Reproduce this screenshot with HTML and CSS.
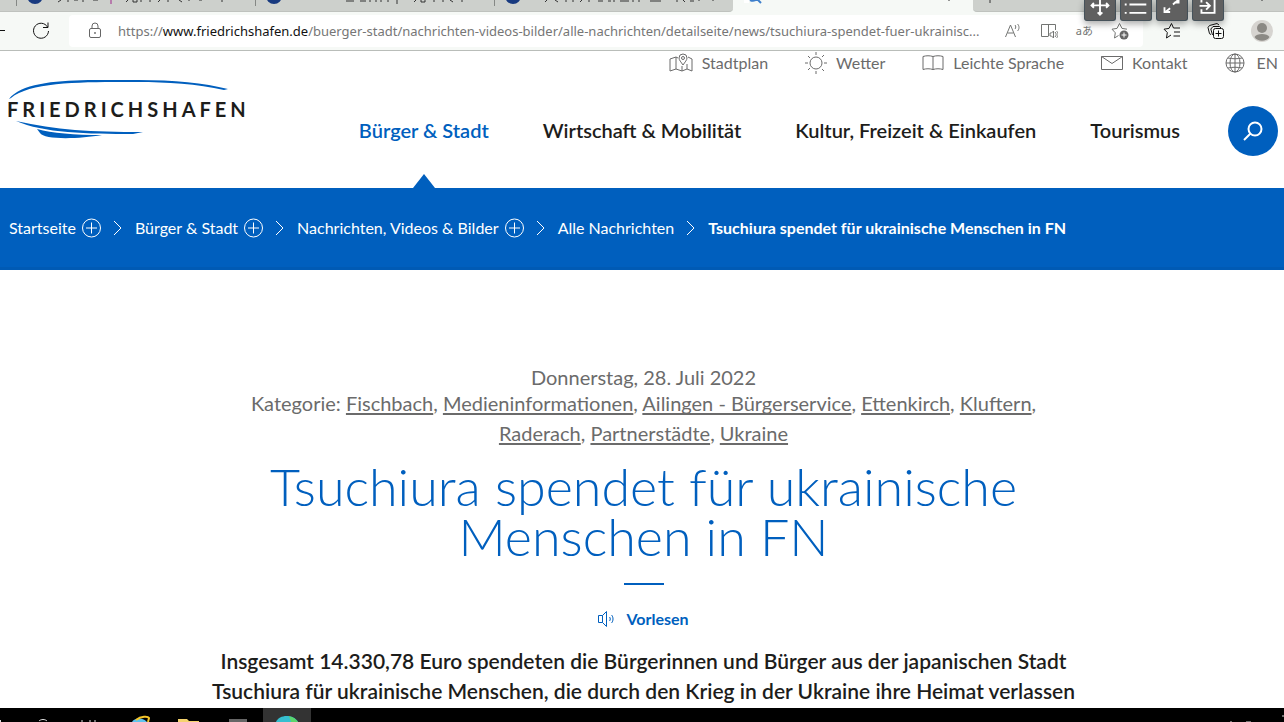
FILE: index.html
```html
<!DOCTYPE html>
<html lang="de">
<head>
<meta charset="utf-8">
<title>Tsuchiura spendet für ukrainische Menschen in FN</title>
<link rel="stylesheet" href="styles.css">
</head>
<body>
<div class="tabs">
  <div class="tab-group">
    <div class="tab"><svg class="tab-art" width="220" height="12" viewBox="0 0 220 12"><circle cx="18" cy="-4" r="8" fill="#183a80"/><path d="M44 0l-3 2M51 0v2M57 0h4M66 0v2M76 0h5M111 0l-2 2M116 0v2h4v-2M124 0v2M133 0v2M143 0l-2 2M151 0v2M162 0l3 2M172 0v1M182 0h3M205 0v2M222 0v2" /><path class="accent" d="M94 0v4"/></svg></div>
    <div class="tab"><svg class="tab-art" width="220" height="12" viewBox="0 0 220 12"><circle cx="18" cy="-4" r="8" fill="#183a80"/><path d="M90 1h8M104 1h6M114 0v2M120 0v2M125 0v2M132 0v2M160 0l-2 2M165 0v2h4v-2M178 0v2M187 0v2M194 0l3 2M206 0v2"/><path d="M141 0v4"/></svg></div>
    <div class="tab"><svg class="tab-art" width="220" height="12" viewBox="0 0 220 12"><circle cx="18" cy="-4" r="8" fill="#183a80"/><path d="M52 0l-2 2M60 0l3 2M71 0v2M78 0v2M87 0l-2 2M94 0v2M103 1h5M113 1h3M119 0v2M125 1h9M138 0v2M144 0v2M155 1h11M182 0v2M188 0l2 2M195 1h4M204 0v1M218 0v1"/></svg></div>
  </div>
  <div class="tab tab-active"><svg class="tab-art" width="220" height="12" viewBox="0 0 220 12"><path class="fav" d="M11 0h5v3h-5z"/><path class="search-tail" d="M17 0c2 1 5 1 7-1l4 4"/><path d="M216 0v1M222 0v1"/></svg></div>
  <div class="tab-rest"><svg class="tab-art" width="290" height="12" viewBox="0 0 290 12"><path d="M17 0v3M288 0h2"/></svg></div>
</div>

<div class="toolbar">
  <svg class="back" width="6" height="20" viewBox="0 0 6 20"><path d="M0 9.500h5"/></svg>
  <button class="tool reload" aria-label="Aktualisieren"><svg width="20" height="20" viewBox="0 0 20 20"><path d="M16.500 6A7.500 7.500 0 1 0 17.500 10M17 1.500V6.500H12"/></svg></button>
  <div class="address">
    <svg class="lock" width="14" height="18" viewBox="0 0 14 18"><rect x="1.500" y="6.500" width="11" height="9" rx="1.500"/><path d="M4 6V4a3 3 0 0 1 6 0v2"/><circle cx="7" cy="11" r=".6"/></svg>
    <p class="url">https://<b>www.friedrichshafen.de</b>/buerger-stadt/nachrichten-videos-bilder/alle-nachrichten/detailseite/news/tsuchiura-spendet-fuer-ukrainisc...</p>
    <div class="address-tools">
      <button class="tool" aria-label="Laut vorlesen"><svg width="18" height="18" viewBox="0 0 18 18"><path d="M1.500 15L6.500 3l5 12M3.500 11h6M11 3c1 1 1 3 0 4M13.500 2c2 2 2 5 0 7"/></svg></button>
      <button class="tool" aria-label="Plastischer Reader"><svg width="18" height="18" viewBox="0 0 18 18"><path d="M9 2.500H1.500v12H8M8.500 2.500v12M9 2.500h6.500V8M10 11v3h1.500l2 2v-7l-2 2zM15 10c1.500 1.500 1.500 3.500 0 5M16.500 9c2 2 2 5 0 7"/></svg></button>
      <button class="tool translate" aria-label="Übersetzen">aあ</button>
      <button class="tool" aria-label="Favorit hinzufügen"><svg width="18" height="18" viewBox="0 0 18 18"><path d="M7.500 13.500L3.500 16l.8-5.200L1 7.200l5-.8L8.500 1.500 11 6.400l5 .8"/><circle class="solid" cx="13" cy="13" r="4.500"/><path class="white" d="M10.500 13h5M13 10.500v5"/></svg></button>
    </div>
  </div>
  <div class="browser-tools">
    <button class="tool" aria-label="Favoriten"><svg width="18" height="18" viewBox="0 0 18 18"><path d="M8 13l-4.500 3 .8-5.500L1 7.200l5-.8L8.500 1.500 10.500 6H17M11 10h6M10.500 14H17"/></svg></button>
    <button class="tool" aria-label="Sammlungen"><svg width="18" height="18" viewBox="0 0 18 18"><path d="M4 12.500l-1.500-.8L1 5.500 2.500 3.500 10 1.500 12 3M5.500 13L3.800 7 6 4.500h6.500L14 6"/><rect x="6.500" y="6.500" width="10" height="10" rx="2"/><path d="M8.500 11.500h6M11.500 8.500v6"/></svg></button>
    <button class="tool" aria-label="Profil"><svg width="22" height="22" viewBox="0 0 22 22"><circle cx="11" cy="11" r="11" fill="#d6d4d0" stroke="none"/><circle cx="11" cy="8" r="5" fill="#8b8984" stroke="none"/><path d="M3.500 17c2-4 13-4 15 0-3 5-12 5-15 0z" fill="#8b8984" stroke="none"/></svg></button>
  </div>
</div>

<div class="remote-bar">
  <button aria-label="Verschieben"><svg width="32" height="22" viewBox="0 0 32 22"><path d="M16-4v19M7 5h18M9.500 2.500L7 5l2.500 2.500M22.500 2.500L25 5l-2.500 2.500M13.500 12.500L16 15l2.500-2.500"/></svg></button>
  <button aria-label="Menü"><svg width="32" height="22" viewBox="0 0 32 22"><path d="M4 4h2M9 4h18M4 13h2M9 13h18"/></svg></button>
  <button aria-label="Vollbild"><svg width="32" height="22" viewBox="0 0 32 22"><path d="M9 12l5-4M17 4l6-5M8 7v5h6M18 2h5v-4"/></svg></button>
  <button aria-label="Beenden"><svg width="32" height="22" viewBox="0 0 32 22"><path d="M9 2V-2h14v15H9V9M7 5.500h11M14 1.500l4 4-4 4"/></svg></button>
</div>

<div class="page">
<header class="header">
  <a class="logo" href="#" aria-label="Friedrichshafen"><svg width="246" height="60" viewBox="0 0 246 60"><path class="blue" d="M1 19C18-3 80 0 130 0c36 0 66 3 90 9l-4 1C190 4 158 2 130 2 80 2 23 1 3 18zM8 41c40 9 75 11 127 11l-10 2C80 54 35 53 8 41zM29 49c15 4 37 6 65 6-23 4-58 5-62-2z"/><text x="-1" y="37">FRIEDRICHSHAFEN</text></svg></a>
  <div class="header-nav">
    <nav class="service">
      <a href="#"><svg width="24" height="20" viewBox="0 0 24 20"><path d="M9 5L7 4 1 6v12l6-2 6 2 5-2 5 2V6l-4-2M7 4v12M13 13v5M18 11v5M14 12c-2-3-4-5-4-7a4 4 0 0 1 8 0c0 2-2 4-4 7z"/><circle cx="14" cy="5" r="1.500"/></svg>Stadtplan</a>
      <a href="#"><svg width="22" height="22" viewBox="0 0 22 22"><circle cx="11" cy="11" r="6"/><path d="M11 0v3M11 19v3M0 11h3M19 11h3M3 4l2 2M17 17l2 2M3 18l2-2M17 5l2-2"/></svg>Wetter</a>
      <a href="#"><svg width="22" height="18" viewBox="0 0 22 18"><path d="M11 2.500c-3-1-7-1-10 0v13c3-1 7-1 10 0 3-1 7-1 10 0v-13c-3-1-7-1-10 0zv13"/></svg>Leichte Sprache</a>
      <a href="#"><svg width="22" height="16" viewBox="0 0 22 16"><path d="M.5 1.500h21v13H.5zl10.500 7 10.500-7"/></svg>Kontakt</a>
      <a class="language" href="#"><svg width="20" height="20" viewBox="0 0 20 20"><circle cx="10" cy="10" r="9"/><ellipse cx="10" cy="10" rx="5" ry="9"/><path d="M10 1v18M1 10h18M3 5c4 1 10 1 14 0M3 15c4-1 10-1 14 0"/></svg>EN</a>
    </nav>
    <div class="primary">
      <nav class="main-nav">
        <a class="active" href="#">Bürger &amp; Stadt</a>
        <a href="#">Wirtschaft &amp; Mobilität</a>
        <a href="#">Kultur, Freizeit &amp; Einkaufen</a>
        <a href="#">Tourismus</a>
      </nav>
      <button class="search" aria-label="Suche"><svg width="20" height="20" viewBox="0 0 20 20"><circle cx="12" cy="8" r="6.500"/><path d="M7.500 12.500L1 19"/></svg></button>
    </div>
  </div>
</header>

<nav class="breadcrumb" aria-label="Brotkrumen">
  <a href="#">Startseite</a><button aria-label="Startseite öffnen"><svg width="19" height="20" viewBox="0 0 19 20"><circle cx="9.500" cy="10" r="9"/><path d="M9.500 4.500v11M4 10h11"/></svg></button><svg class="chevron" width="9" height="16" viewBox="0 0 9 16"><path d="M1 1l7 7-7 7"/></svg>
  <a href="#">Bürger &amp; Stadt</a><button aria-label="Bürger &amp; Stadt öffnen"><svg width="19" height="20" viewBox="0 0 19 20"><circle cx="9.500" cy="10" r="9"/><path d="M9.500 4.500v11M4 10h11"/></svg></button><svg class="chevron" width="9" height="16" viewBox="0 0 9 16"><path d="M1 1l7 7-7 7"/></svg>
  <a href="#">Nachrichten, Videos &amp; Bilder</a><button aria-label="Nachrichten öffnen"><svg width="19" height="20" viewBox="0 0 19 20"><circle cx="9.500" cy="10" r="9"/><path d="M9.500 4.500v11M4 10h11"/></svg></button><svg class="chevron" width="9" height="16" viewBox="0 0 9 16"><path d="M1 1l7 7-7 7"/></svg>
  <a href="#">Alle Nachrichten</a><svg class="chevron" width="9" height="16" viewBox="0 0 9 16"><path d="M1 1l7 7-7 7"/></svg>
  <strong>Tsuchiura spendet für ukrainische Menschen in FN</strong>
</nav>

<main class="article">
  <p class="date">Donnerstag, 28. Juli 2022</p>
  <p class="categories">Kategorie: <a href="#">Fischbach</a>, <a href="#">Medieninformationen</a>, <a href="#">Ailingen - Bürgerservice</a>, <a href="#">Ettenkirch</a>, <a href="#">Kluftern</a>, <br><a href="#">Raderach</a>, <a href="#">Partnerstädte</a>, <a href="#">Ukraine</a></p>
  <h1>Tsuchiura spendet für ukrainische<br>Menschen in FN</h1>
  <hr>
  <button class="read"><svg width="18" height="16" viewBox="0 0 18 16"><path d="M.5 4.500h4v7h-4zM4.500 4.500l4-4v15l-4-4M11.500 6c1 1 1 3 0 4M13.500 4c2 2 2 6 0 8"/></svg>Vorlesen</button>
  <p class="lead">Insgesamt 14.330,78 Euro spendeten die Bürgerinnen und Bürger aus der japanischen Stadt<br>Tsuchiura für ukrainische Menschen, die durch den Krieg in der Ukraine ihre Heimat verlassen</p>
</main>
</div>

<footer class="taskbar">
  <svg class="task-items" width="320" height="14" viewBox="0 0 320 14"><path class="light" d="M.5 12v2M39 13c2-2 6-2 8 0M82 12v2M90 12v2M95 12v2"/><path d="M132 14c2-4 10-5 15 0z" fill="#5fc3ee"/><path class="gold" d="M136 12c5-4 12-4 13-2l-1 4"/><path d="M178 11h9l2 2h10v1h-21z" fill="#f5d36e"/><path d="M229 11h18v3h-18z" fill="#666"/><path d="M263 0h48v14h-48z" fill="#333"/><path d="M276 14c3-8 18-8 22 0z" fill="#36bfd0"/><path d="M289 8c4 1 7 3 9 6h-7z" fill="#5bd66b"/></svg>
  <svg class="tray" width="60" height="14" viewBox="0 0 60 14"><path class="light" d="M7 13v1M22 14h5M58 8h2"/></svg>
</footer>
</body>
</html>
```

FILE: styles.css
```css
* { box-sizing: border-box; }
body { margin: 0; min-height: 100vh; display: flex; flex-direction: column; background: #fff; color: #1d1d1b; font-family: Lato, sans-serif; font-size: 16px; }
button { margin: 0; padding: 0; border: 0; background: none; font: inherit; color: inherit; }
a { color: inherit; text-decoration: none; }
p, h1 { margin: 0; }
svg { display: block; flex: none; fill: none; stroke: currentColor; overflow: hidden; }

.tabs { display: flex; height: 12px; background: #f6f9f6; }
.tab-group { display: flex; padding-left: 16px; background: #cdd0cc; border-bottom: 1px solid #bfc2be; border-radius: 0 0 4px 0; }
.tab { width: 239px; }
.tab-group .tab { height: 6px; border-left: 1px solid #858885; }
.tab-active { width: 240px; }
.tab-rest { flex: 1; background: #cdd0cc; border-bottom: 1px solid #bfc2be; border-radius: 0 0 0 4px; }
.tab-art { color: #333; }
.tab-art circle { stroke: none; }
.tab-art .accent { stroke: #a0288c; }
.tab-art .fav { fill: #fff; stroke: none; }
.tab-art .search-tail { stroke: #3f80cc; stroke-width: 2; }

.toolbar { display: flex; align-items: center; height: 39px; padding-right: 11px; background: #f6f9f6; border-bottom: 1px solid #b9bdb9; }
.back, .reload { color: #111; }
.reload { margin-left: 25px; }
.address { flex: 1; display: flex; align-items: center; height: 32px; margin-left: 18px; padding: 0 14px 0 19px; background: #fff; border-radius: 4px; color: #666; }
.url { margin-left: 16px; color: #767676; font: 13px/20px "Noto Sans", sans-serif; white-space: nowrap; }
.url b { color: #111; font-weight: 400; }
.address-tools { display: flex; align-items: center; gap: 18px; margin-left: auto; color: #737573; }
.translate { font: 11px/18px "Noto Sans", "Noto Sans CJK JP", sans-serif; white-space: nowrap; }
.solid { fill: #666; stroke: none; }
.white { stroke: #fff; }
.browser-tools { display: flex; align-items: center; gap: 26px; margin-left: 20px; color: #111; }

.remote-bar { position: absolute; top: 0; right: 60px; display: flex; gap: 4px; }
.remote-bar button { height: 21px; overflow: hidden; border: 1px solid #46525a; border-top: 0; border-radius: 0 0 3px 3px; background: #606060; color: #fff; box-shadow: 0 3px 7px #0005; }
.remote-bar svg { width: 30px; stroke-width: 2; }

.page { flex: 1; }
.header { display: flex; justify-content: space-between; height: 137px; padding: 0 6px 0 8px; }
.logo { padding-top: 29px; }
.logo text { fill: #1d1d1b; stroke: none; font: 700 20px Lato, sans-serif; letter-spacing: 4px; }
.logo .blue { fill: #005fbe; stroke: none; }
.service { display: flex; align-items: center; justify-content: flex-end; gap: 37px; height: 23px; color: #6b6b6b; font-size: 16px; line-height: 22px; }
.service a { display: flex; align-items: center; gap: 9px; }
.service .language { gap: 12px; }
.primary { display: flex; align-items: center; justify-content: flex-end; gap: 48px; height: 114px; }
.main-nav { display: flex; align-self: stretch; gap: 54px; font-size: 20px; font-weight: 600; line-height: 30px; }
.main-nav a { position: relative; padding-top: 41px; }
.main-nav .active { color: #005fbe; }
.main-nav .active::after { content: ""; position: absolute; bottom: 0; left: 50%; margin-left: -11px; border: 11px solid transparent; border-top: 0; border-bottom: 14px solid #005fbe; }
.search { display: flex; align-items: center; justify-content: center; width: 50px; height: 50px; border-radius: 50%; background: #005fbe; color: #fff; }
.search svg { stroke-width: 2; }

.breadcrumb { display: flex; align-items: center; height: 82px; padding: 0 9px; border-bottom: 3px solid #005ab4; background: #005fbe; color: #fff; font-size: 16px; line-height: 24px; white-space: nowrap; }
.breadcrumb button { margin-left: 6px; }
.breadcrumb .chevron { margin: 0 13px 0 12px; }

.article { display: flex; flex-direction: column; align-items: center; padding: 92px 0 0 3px; text-align: center; }
.date, .categories { color: #6b6b6b; font-size: 20px; font-weight: 400; line-height: 30px; }
.categories { margin-top: -4px; }
.categories a { text-decoration: underline; text-decoration-thickness: 2px; text-underline-offset: 2px; text-decoration-skip-ink: none; }
h1 { margin-top: 13px; color: #005fbe; font-size: 52px; font-weight: 300; line-height: 50px; }
hr { width: 40px; height: 2px; margin: 22px 0 0; border: 0; background: #005fbe; }
.read { display: flex; align-items: center; gap: 10px; margin-top: 22px; color: #005fbe; font-weight: 700; line-height: 24px; }
.read svg { stroke-width: 1; }
.lead { height: 61px; margin-top: 15px; font-size: 21px; font-weight: 600; line-height: 30px; }

.taskbar { display: flex; justify-content: space-between; height: 14px; background: #000; }
.taskbar svg path { stroke: none; }
.taskbar svg .light { stroke: #ddd; }
.taskbar svg .gold { stroke: #f5c52a; stroke-width: 2; }
```
